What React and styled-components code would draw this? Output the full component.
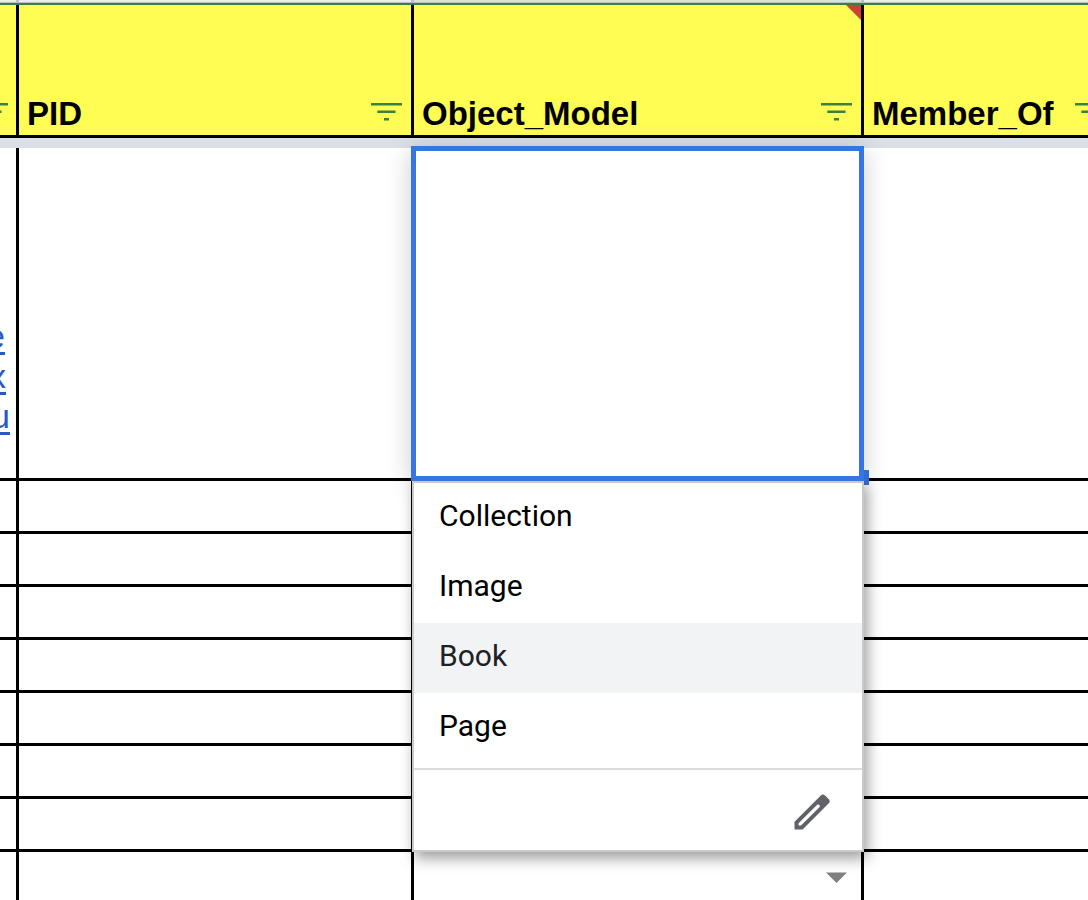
import React from "react";
import styled, { createGlobalStyle } from "styled-components";

const GlobalStyle = createGlobalStyle`
  *, *::before, *::after { box-sizing: border-box; }
  body { margin: 0; background: #fff; }
  button { padding: 0; border: 0; background: none; font: inherit; color: inherit; cursor: pointer; }
`;

const Sheet = styled.main`
  height: 100vh;
  overflow: hidden;
  background: #fff;
  font-family: "Liberation Sans", Arial, sans-serif;
`;

const Grid = styled.table`
  width: calc(100% + 30px);
  table-layout: fixed;
  border-spacing: 0;
`;

const Column = styled.col`
  width: ${(p) => (p.$width ? `${p.$width}px` : "auto")};
`;

const StripCell = styled.td`
  height: 3px;
  padding: 0;
  background: ${(p) => (p.$active ? "#d3e6d9" : "#e8eff0")};
  border-right: 3px solid #c0c0c0;
  border-bottom: 1px solid #c0c0c0;
`;

const FilterEdge = styled.td`
  height: 2px;
  padding: 0;
  background: #3a7f45;
`;

const HeaderCell = styled.th`
  position: relative;
  height: 133px;
  padding: 0 9px 0 8px;
  vertical-align: bottom;
  background: #fffd54;
  border-right: 3px solid #000;
  border-bottom: 3px solid #000;
`;

const HeaderContent = styled.div`
  display: flex;
  align-items: center;
  justify-content: ${(p) => (p.$clipped ? "flex-end" : "space-between")};
  height: 46px;
`;

const HeaderLabel = styled.span`
  padding-top: 4px;
  font-size: 33px;
  font-weight: 700;
  line-height: 42px;
  white-space: nowrap;
`;

const FilterButton = styled.button`
  flex: none;
  width: 31px;
  height: 18px;
  svg { display: block; }
`;

const NoteMark = styled.span`
  position: absolute;
  top: 0;
  right: 0;
  border-top: 15px solid #cc4133;
  border-left: 15px solid transparent;
`;

const FreezeBar = styled.td`
  height: 10px;
  padding: 0;
  background: #dadfe8;
`;

const Cell = styled.td`
  position: relative;
  height: ${(p) => (p.$tall ? 333 : 53)}px;
  padding: 0;
  border-right: 3px solid #000;
  border-bottom: 3px solid #000;
`;

const CellLink = styled.a`
  display: flex;
  flex-direction: column;
  align-items: flex-end;
  padding-top: 126px;
  color: #2659c7;
  font-size: 34px;
  line-height: 40px;
  text-decoration: none;
`;

const LinkLine = styled.span`
  margin-right: ${(p) => p.$gap}px;
  text-decoration: underline;
  text-decoration-thickness: 3px;
  text-underline-offset: 4px;
`;

const Editor = styled.div`
  position: absolute;
  z-index: 2;
  inset: -2px -3px -3px;
  background: #fff;
  border: 5px solid #3576e0;
  box-shadow: 0 4px 24px rgba(0, 0, 0, 0.2);
`;

const FillHandle = styled.span`
  position: absolute;
  right: -10px;
  bottom: -9px;
  width: 5px;
  height: 15px;
  background: #316dd0;
`;

const Menu = styled.div`
  position: absolute;
  top: calc(100% + 5px);
  left: -4px;
  right: -5px;
  background: #fff;
  border: 2px solid #cacaca;
  box-shadow: 3px 6px 14px rgba(0, 0, 0, 0.4);
  clip-path: inset(0 -40px -40px -40px);
  font-family: Roboto, sans-serif;
`;

const Options = styled.ul`
  margin: 0;
  padding: 0 0 5px;
  list-style: none;
`;

const Option = styled.button`
  display: block;
  width: 100%;
  height: 70px;
  padding: 0 25px 4px;
  background: ${(p) => (p.$active ? "#f1f3f4" : "#fff")};
  color: ${(p) => (p.$active ? "#202124" : "#000")};
  font-size: 30px;
  line-height: 66px;
  text-align: left;
`;

const MenuFooter = styled.div`
  display: flex;
  align-items: center;
  justify-content: flex-end;
  height: 82px;
  padding: 4px 32px 0 0;
  border-top: 2px solid #dadce0;
`;

const EditButton = styled.button`
  width: 36px;
  height: 36px;
  svg { display: block; }
`;

const CaretButton = styled.button`
  display: block;
  width: 21px;
  height: 11px;
  margin: 0 14px 0 auto;
  svg { display: block; }
`;

function Filter({ name }) {
  return (
    <FilterButton type="button" aria-label={`Filter ${name}`}>
      <svg width="31" height="18" viewBox="0 0 31 18" fill="#3a7f45">
        <rect width="31" height="2.5" />
        <rect x="6.3" y="7.5" width="18.2" height="2.5" />
        <rect x="13" y="15" width="5" height="2.5" />
      </svg>
    </FilterButton>
  );
}

const options = ["Collection", "Image", "Book", "Page"];
const linkLines = [
  { text: "e", gap: 11 },
  { text: "x", gap: 10 },
  { text: "u", gap: 6 },
];
const rows = [1, 2, 3, 4, 5, 6, 7, 8];

export default function App() {
  return (
    <Sheet>
      <GlobalStyle />
      <Grid>
        <colgroup>
          <Column $width={19} />
          <Column $width={395} />
          <Column $width={450} />
          <Column />
        </colgroup>
        <thead>
          <tr>
            <StripCell />
            <StripCell />
            <StripCell $active />
            <StripCell />
          </tr>
          <tr>
            <FilterEdge colSpan={4} />
          </tr>
          <tr>
            <HeaderCell scope="col">
              <HeaderContent $clipped>
                <Filter name="column" />
              </HeaderContent>
            </HeaderCell>
            <HeaderCell scope="col">
              <HeaderContent>
                <HeaderLabel>PID</HeaderLabel>
                <Filter name="PID" />
              </HeaderContent>
            </HeaderCell>
            <HeaderCell scope="col">
              <HeaderContent>
                <HeaderLabel>Object_Model</HeaderLabel>
                <Filter name="Object_Model" />
              </HeaderContent>
              <NoteMark />
            </HeaderCell>
            <HeaderCell scope="col">
              <HeaderContent>
                <HeaderLabel>Member_Of</HeaderLabel>
                <Filter name="Member_Of" />
              </HeaderContent>
            </HeaderCell>
          </tr>
        </thead>
        <tbody>
          <tr>
            <FreezeBar colSpan={4} />
          </tr>
          <tr>
            <Cell $tall>
              <CellLink href="#">
                {linkLines.map((line) => (
                  <LinkLine key={line.text} $gap={line.gap}>{line.text}</LinkLine>
                ))}
              </CellLink>
            </Cell>
            <Cell $tall />
            <Cell $tall>
              <Editor>
                <FillHandle />
                <Menu>
                  <Options>
                    {options.map((name) => (
                      <li key={name}>
                        <Option type="button" $active={name === "Book"}>{name}</Option>
                      </li>
                    ))}
                  </Options>
                  <MenuFooter>
                    <EditButton type="button" aria-label="Edit options">
                      <svg width="36" height="36" viewBox="0 0 36 36">
                        <path
                          fill="#5f6368"
                          fillRule="evenodd"
                          d="M.5 27.8 26.8 1.4Q28.8-.2 31 1.4L34.8 5.2Q36.6 7.2 34.8 9.2L8.6 35.6H.5ZM4.6 29.2V31.6H7L25.4 13.2Q26.4 12 25.4 11Q24.4 10 23.2 10.8Z"
                        />
                      </svg>
                    </EditButton>
                  </MenuFooter>
                </Menu>
              </Editor>
            </Cell>
            <Cell $tall />
          </tr>
          {rows.map((row) => (
            <tr key={row}>
              <Cell />
              <Cell />
              <Cell>
                {row === 8 && (
                  <CaretButton type="button" aria-label="Open options">
                    <svg width="21" height="11" viewBox="0 0 21 11">
                      <path fill="#808080" d="M0 .5H21L10.5 11Z" />
                    </svg>
                  </CaretButton>
                )}
              </Cell>
              <Cell />
            </tr>
          ))}
        </tbody>
      </Grid>
    </Sheet>
  );
}
